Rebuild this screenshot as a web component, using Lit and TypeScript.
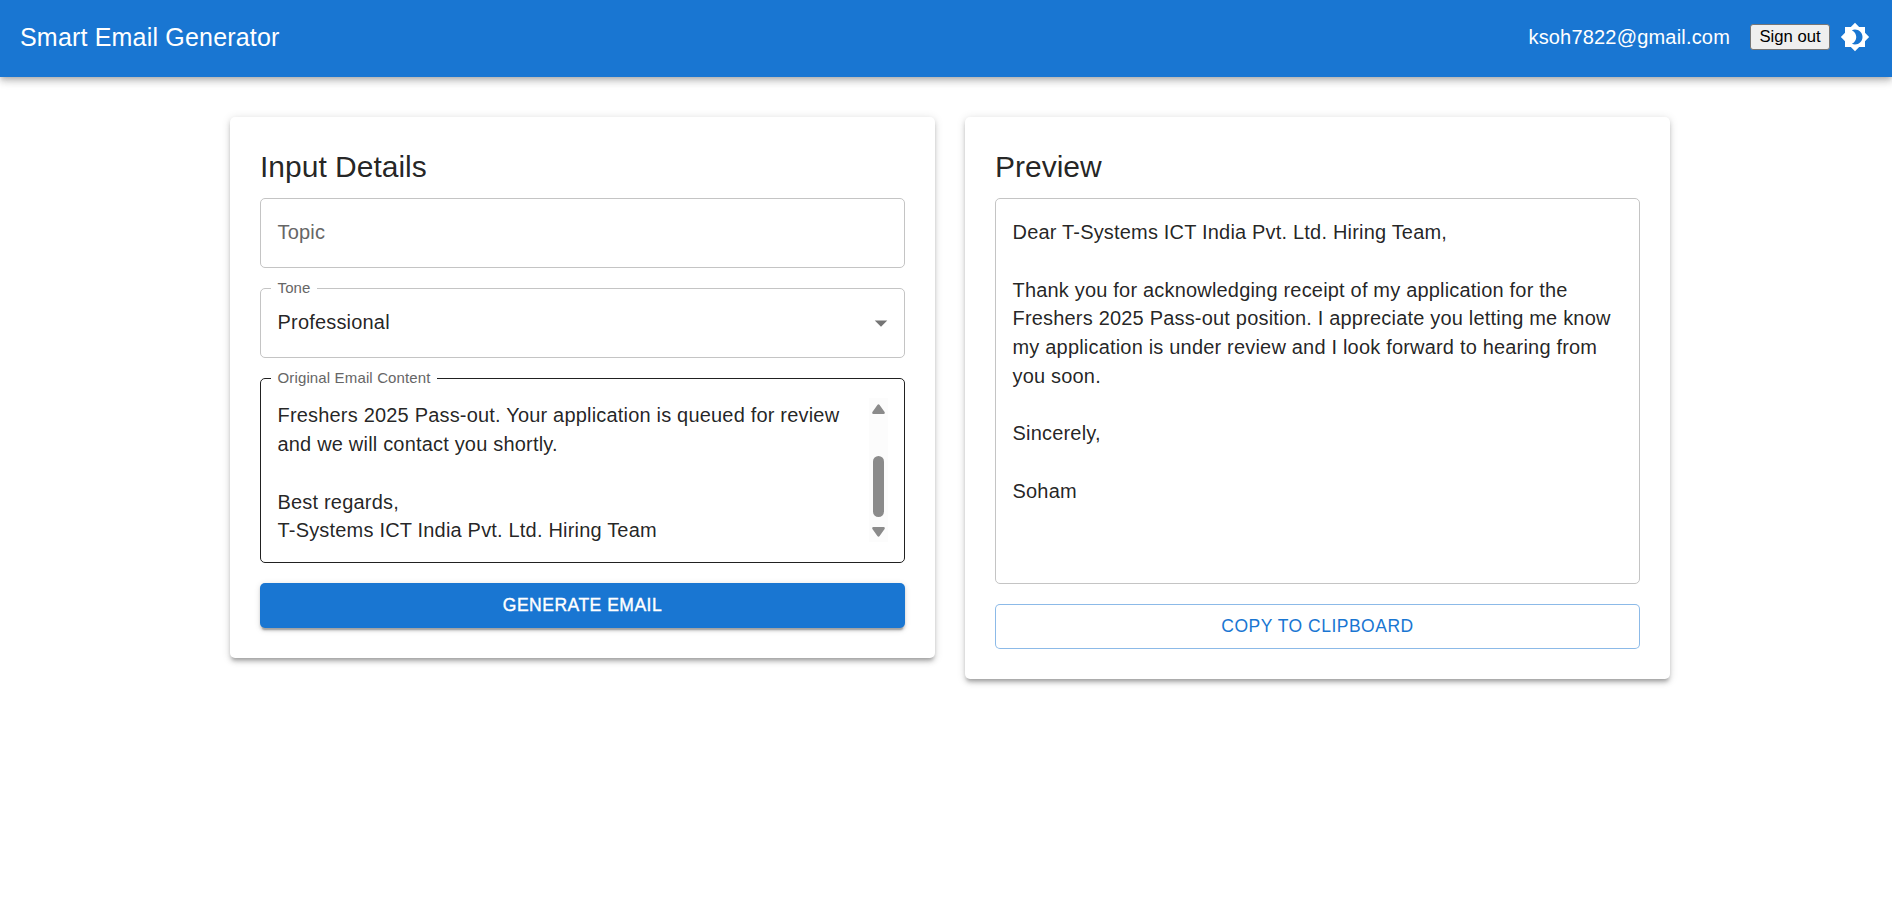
import { LitElement, html, css } from "lit";
import { customElement, state } from "lit/decorators.js";

const ORIGINAL = [
  "Freshers 2025 Pass-out. Your application is queued for review",
  "and we will contact you shortly.",
  "",
  "Best regards,",
  "T-Systems ICT India Pvt. Ltd. Hiring Team",
].join("\n");

const REPLY = [
  "Dear T-Systems ICT India Pvt. Ltd. Hiring Team,",
  "",
  "Thank you for acknowledging receipt of my application for the",
  "Freshers 2025 Pass-out position. I appreciate you letting me know",
  "my application is under review and I look forward to hearing from",
  "you soon.",
  "",
  "Sincerely,",
  "",
  "Soham",
].join("\n");

@customElement("app-root")
export class AppRoot extends LitElement {
  @state() private tone = "Professional";
  @state() private user = "ksoh7822@gmail.com";

  static styles = css`
    :host {
      display: block;
      min-height: 100vh;
      overflow: hidden;
      background: #fff;
      color: rgba(0, 0, 0, 0.87);
      font: 400 20px/30px "Liberation Sans", Arial, sans-serif;
      letter-spacing: 0.188px;
    }
    * { box-sizing: border-box; }
    .bar {
      display: flex;
      align-items: center;
      height: 77px;
      padding: 0 12px 3px 20px;
      background: #1976d2;
      color: #fff;
      box-shadow: 0 2.5px 5px -1.25px rgba(0, 0, 0, 0.2),
        0 5px 6.25px 0 rgba(0, 0, 0, 0.14), 0 1.25px 12.5px 0 rgba(0, 0, 0, 0.12);
    }
    .brand {
      flex: 1;
      margin: 0;
      font-size: 25px;
      font-weight: 400;
      line-height: 40px;
      letter-spacing: 0.188px;
    }
    .user { margin-right: 20px; }
    .signout {
      width: 80px;
      height: 26px;
      padding: 0;
      border: 1px solid #767676;
      border-radius: 3px;
      background: #efefef;
      color: #000;
      font: 16.667px/20px "Liberation Sans", Arial, sans-serif;
      letter-spacing: 0;
    }
    .theme {
      display: flex;
      padding: 10px;
      border: 0;
      background: none;
      color: #fff;
    }
    .theme svg { width: 30px; height: 30px; fill: currentColor; }
    .content {
      display: grid;
      grid-template-columns: 705px 705px;
      gap: 30px;
      align-items: start;
      justify-content: start;
      padding: 40px 0 0 230px;
    }
    .card {
      display: flex;
      flex-direction: column;
      padding: 30px;
      border-radius: 5px;
      background: #fff;
      box-shadow: 0 3.75px 3.75px -2.5px rgba(0, 0, 0, 0.2),
        0 3.75px 5px 0 rgba(0, 0, 0, 0.14), 0 1.25px 10px 0 rgba(0, 0, 0, 0.12);
    }
    .heading {
      margin: 0 0 11px;
      font-size: 30px;
      font-weight: 400;
      line-height: 40px;
      letter-spacing: 0;
    }
    .field {
      position: relative;
      display: flex;
      justify-content: space-between;
      height: 70px;
      margin-bottom: 20px;
      padding: 19.02px 16.5px;
      border: 1px solid #c4c4c4;
      border-radius: 5px;
      line-height: 28.75px;
    }
    .area { height: 185px; border-color: #212121; }
    .area .text { padding-top: 3.3px; }
    .preview { height: 386px; }
    .placeholder { color: #666; }
    .label {
      position: absolute;
      top: -12px;
      left: 10px;
      padding: 0 6.5px 0 6.5px;
      background: #fff;
      color: #666;
      font-size: 15px;
      line-height: 22px;
      letter-spacing: 0.14px;
    }
    .text { white-space: pre; }
    .caret { width: 30px; height: 30px; margin-right: -8px; fill: #757575; }
    .scroll {
      display: flex;
      flex-direction: column;
      align-items: center;
      width: 18.5px;
      height: 144px;
      background: #fcfcfc;
      fill: #8b8b8b;
    }
    .scroll svg { width: 13px; height: 10px; }
    .up { margin: 6px 0 42px; }
    .down { margin-top: 10px; }
    .thumb { width: 11px; height: 61px; border-radius: 6px; background: #8b8b8b; }
    .action {
      height: 45px;
      padding: 0 0 2px;
      border: 1px solid rgba(25, 118, 210, 0.5);
      border-radius: 5px;
      background: #fff;
      color: #1976d2;
      font: 400 17.5px/30px "Liberation Sans", Arial, sans-serif;
      letter-spacing: 0.5px;
      text-transform: uppercase;
    }
    .primary {
      border: 0;
      background: #1976d2;
      color: #fff;
      -webkit-text-stroke: 0.4px #fff;
      box-shadow: 0 3.75px 1.25px -2.5px rgba(0, 0, 0, 0.2),
        0 2.5px 2.5px 0 rgba(0, 0, 0, 0.14), 0 1.25px 6.25px 0 rgba(0, 0, 0, 0.12);
    }
  `;

  render() {
    return html`
      <header class="bar">
        <h1 class="brand">Smart Email Generator</h1>
        <span class="user">${this.user}</span>
        <button class="signout">Sign out</button>
        <button class="theme" aria-label="Toggle theme">
          <svg viewBox="0 0 24 24">
            <path d="M20 8.69V4h-4.69L12 .69 8.69 4H4v4.69L.69 12 4 15.31V20h4.69L12 23.31 15.31 20H20v-4.69L23.31 12 20 8.69zM12 18c-.89 0-1.74-.2-2.5-.55C11.56 16.5 13 14.42 13 12s-1.44-4.5-3.5-5.45C10.26 6.2 11.11 6 12 6c3.31 0 6 2.69 6 6s-2.69 6-6 6z" />
          </svg>
        </button>
      </header>
      <main class="content">
        <section class="card">
          <h2 class="heading">Input Details</h2>
          <div class="field"><span class="placeholder">Topic</span></div>
          <div class="field">
            <span class="label">Tone</span>
            <span>${this.tone}</span>
            <svg class="caret" viewBox="0 0 24 24"><path d="M7 10l5 5 5-5z" /></svg>
          </div>
          <div class="field area">
            <span class="label">Original Email Content</span>
            <div class="text">${ORIGINAL}</div>
            <div class="scroll">
              <svg class="up" viewBox="0 0 13 10">
                <path d="M5.4 1Q6.5-.6 7.6 1L12.6 8Q13.3 9.8 11.6 10H1.4Q-.3 9.8.4 8Z" />
              </svg>
              <div class="thumb"></div>
              <svg class="down" viewBox="0 0 13 10">
                <path d="M5.4 9Q6.5 10.6 7.6 9L12.6 2Q13.3.2 11.6 0H1.4Q-.3.2.4 2Z" />
              </svg>
            </div>
          </div>
          <button class="action primary">Generate Email</button>
        </section>
        <section class="card">
          <h2 class="heading">Preview</h2>
          <div class="field preview"><div class="text">${REPLY}</div></div>
          <button class="action">Copy to Clipboard</button>
        </section>
      </main>
    `;
  }
}
